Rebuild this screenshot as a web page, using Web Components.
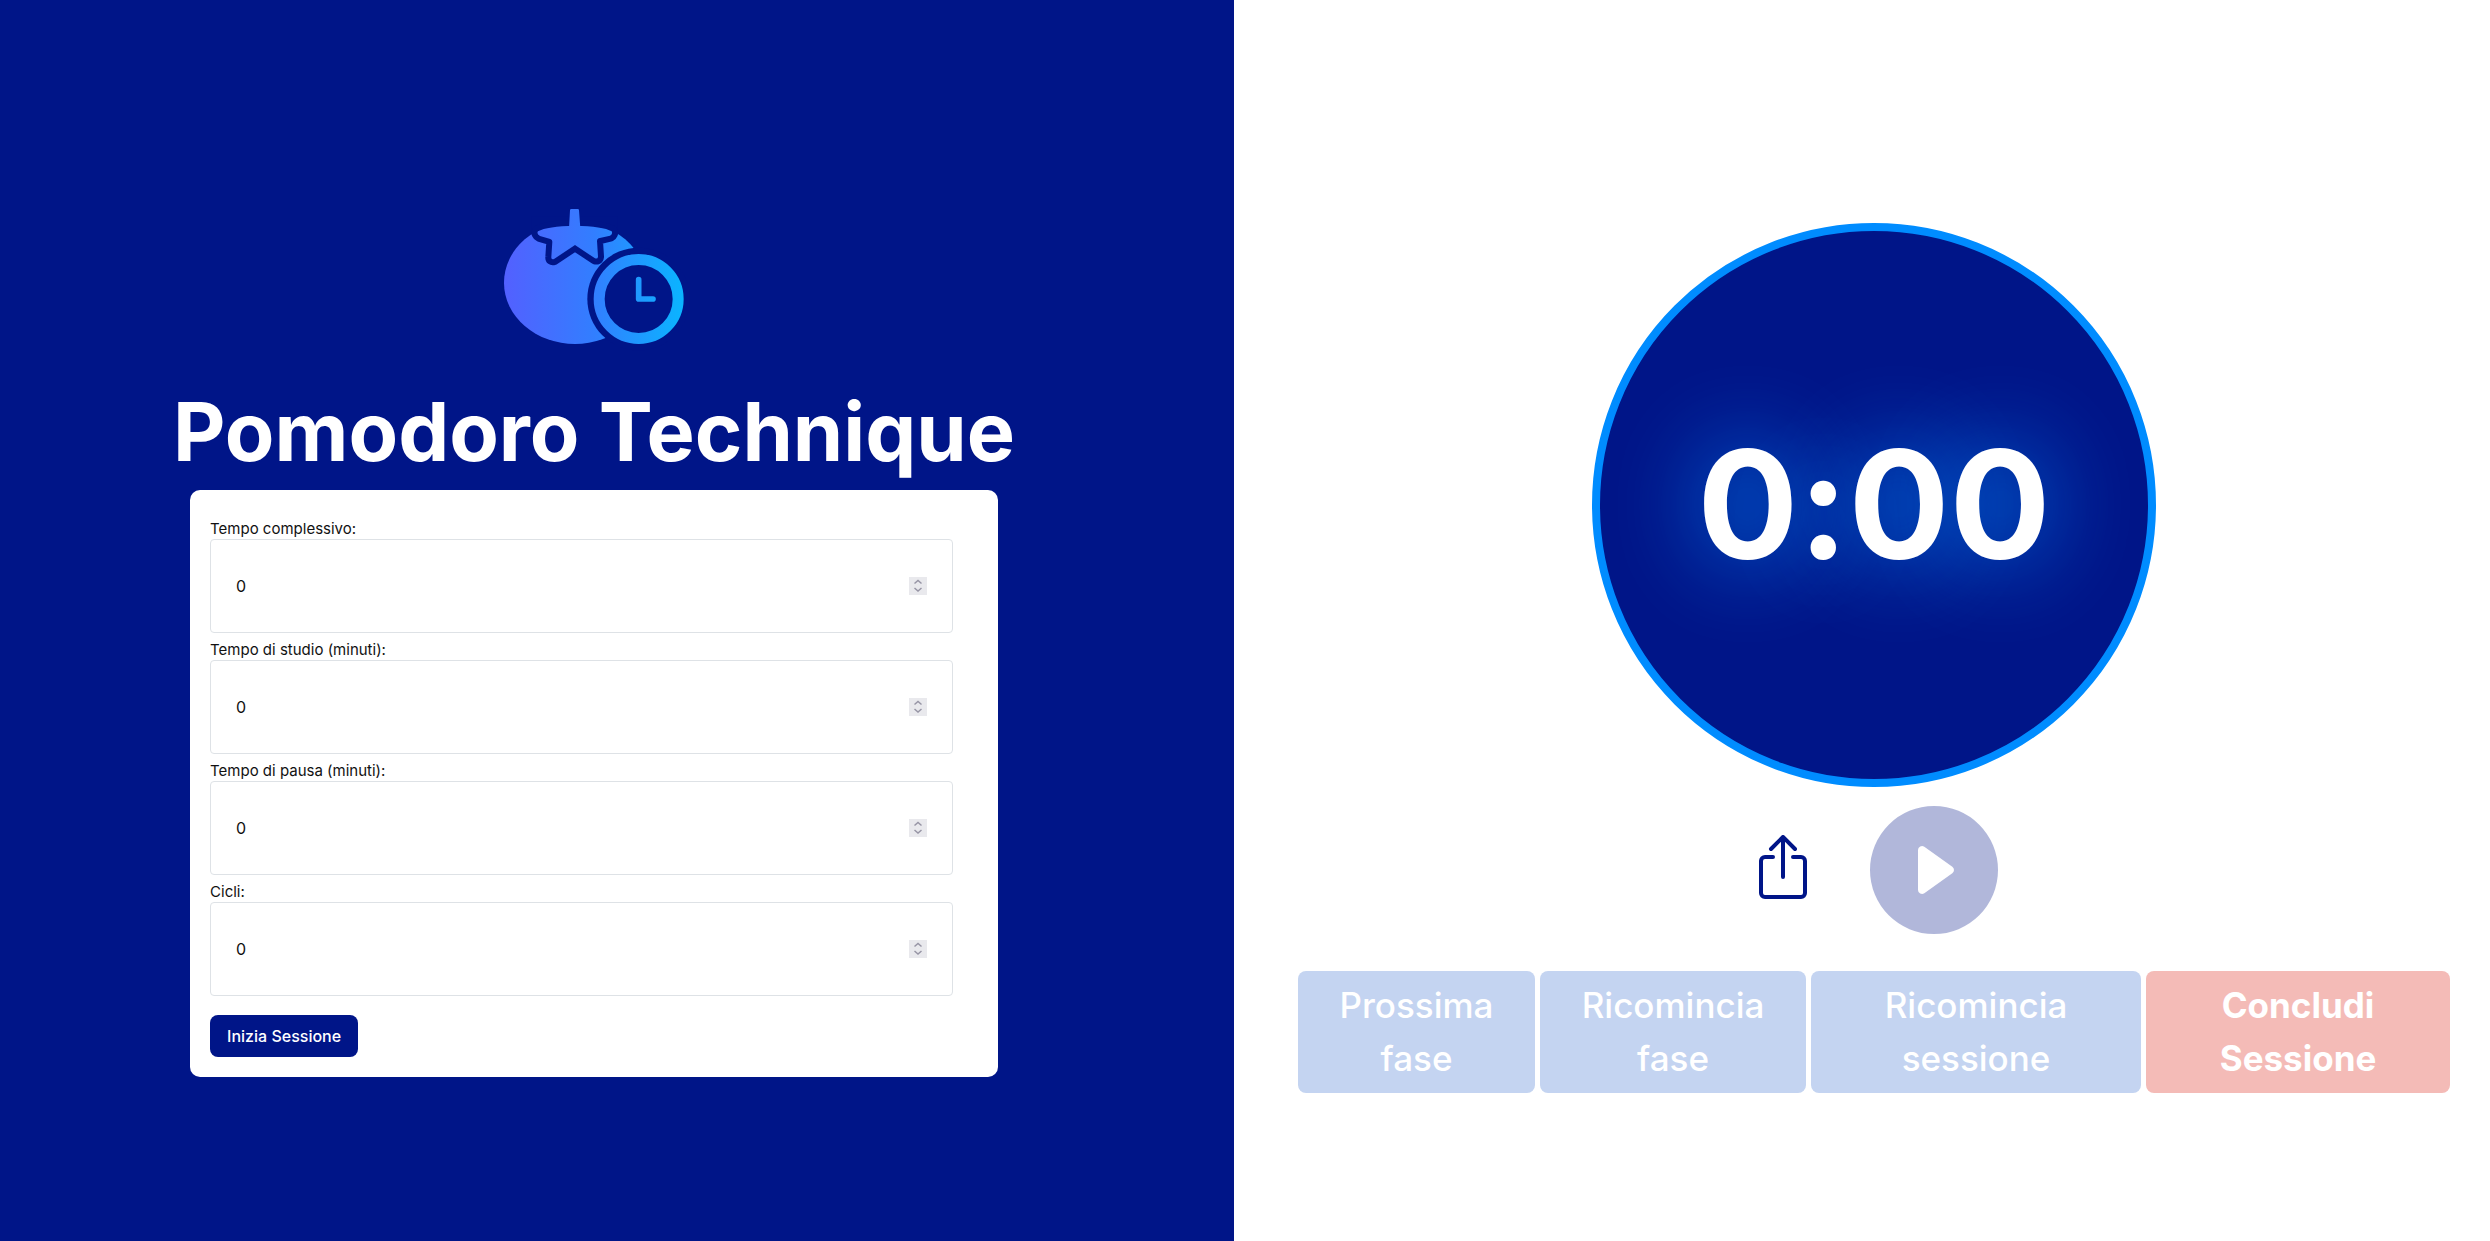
<!DOCTYPE html>
<html lang="it">
<head>
<meta charset="utf-8">
<title>Pomodoro Technique</title>
<style>
  body { margin: 0; background: #fff; font-family: Inter, "Open Sans", sans-serif; --navy: #001588; --azure: #008cff; }
</style>
</head>
<body>
<pomodoro-app></pomodoro-app>
<script>
const define = (name, html) => {
  const tpl = document.createElement('template');
  tpl.innerHTML = html;
  customElements.define(name, class extends HTMLElement {
    constructor() {
      super();
      this.attachShadow({ mode: 'open' }).append(tpl.content.cloneNode(true));
    }
  });
};

define('tomato-logo', `
<style>:host{display:block} svg{display:block;width:220px;height:220px} .cut{fill:var(--navy)} .calyx{stroke:var(--navy)}</style>
<svg viewBox="12 -78 660 660" aria-hidden="true">
  <defs>
    <linearGradient id="g" gradientUnits="userSpaceOnUse" x1="72" y1="0" x2="612" y2="0">
      <stop offset="0" stop-color="#5360ff"/><stop offset=".5" stop-color="#327eff"/><stop offset="1" stop-color="#0ab5ff"/>
    </linearGradient>
  </defs>
  <ellipse cx="285" cy="278" rx="213" ry="184" fill="url(#g)"/>
  <path class="cut" d="M155 80H413V134H155Z"/>
  <path class="calyx" d="M174 124C192 114 230 108 285 108S378 114 395 124Q399 132 390 137L356 145Q351 147 351 153L354 200Q353 208 345 205L285 165L222 207Q213 210 214 201L217 155Q217 149 211 147L180 138Q169 132 174 124Z" fill="url(#g)" stroke-width="36" stroke-linejoin="round" paint-order="stroke"/>
  <path d="M267 115L270 61Q270 57 274 57H293Q297 57 297 61L301 115Z" fill="url(#g)"/>
  <circle class="cut" cx="476" cy="327" r="154"/>
  <circle cx="476" cy="327" r="118.5" fill="none" stroke="url(#g)" stroke-width="33"/>
  <path d="M476 269V327H519" fill="none" stroke="url(#g)" stroke-width="17" stroke-linecap="round" stroke-linejoin="round"/>
</svg>`);

define('number-field', `
<style>
  :host{display:block}
  label{display:block;font-size:15px;line-height:20px;color:#111}
  .box{display:flex;align-items:center;box-sizing:border-box;height:94px;padding:0 25px;border:1px solid #dee2e6;border-radius:4px;background:#fff}
  input{flex:1;min-width:0;padding:0;border:0;outline:0;background:none;font:inherit;font-size:16px;line-height:24px;color:#111;appearance:textfield}
  input::-webkit-inner-spin-button{display:none}
  svg{width:18px;height:18px;background:#e9e9ed}
</style>
<label for="n"><slot></slot></label>
<div class="box"><input id="n" type="number" value="0">
<svg viewBox="0 0 18 18" fill="none" stroke="#9795a5" stroke-width="1.5" aria-hidden="true"><path d="M5.500 6.500L9 3.500L12.500 6.500M5.500 11L9 14L12.500 11"/></svg></div>`);

define('session-form', `
<style>
  :host{display:block;box-sizing:border-box;width:68%;padding:29px 20px 20px;border-radius:10px;background:#fff}
  form{display:flex;flex-direction:column;gap:7px;margin:0}
  number-field{margin-right:25px}
  button{align-self:flex-start;margin-top:12px;height:42px;padding:0 17px;border:0;border-radius:8px;background:var(--navy);color:#fff;font:500 16px/24px Inter,sans-serif}
</style>
<form>
  <number-field>Tempo complessivo:</number-field>
  <number-field>Tempo di studio (minuti):</number-field>
  <number-field>Tempo di pausa (minuti):</number-field>
  <number-field>Cicli:</number-field>
  <button type="button">Inizia Sessione</button>
</form>`);

define('setup-panel', `
<style>
  :host{display:flex;flex-direction:column;align-items:center;justify-content:center;box-sizing:border-box;padding-right:46px;background:var(--navy)}
  h1{margin:0 0 10px;font-size:81px;line-height:96px;font-weight:700;color:#fff;white-space:nowrap}
</style>
<tomato-logo></tomato-logo>
<h1>Pomodoro Technique</h1>
<session-form></session-form>`);

define('timer-dial', `
<style>
  :host{display:flex;align-items:center;justify-content:center;box-sizing:border-box;width:564px;height:564px;border:8px solid var(--azure);border-radius:50%;background:var(--navy);color:#fff;font-size:150px;line-height:180px;font-weight:700;font-feature-settings:"calt" 0;text-shadow:0 0 90px var(--azure)}
</style>
<slot></slot>`);

define('timer-controls', `
<style>
  :host{display:flex;align-items:center;gap:55px}
  button{display:block;padding:0;border:0;background:none;color:var(--navy)}
  .share{padding-bottom:6px}
  button:disabled{opacity:.3}
  svg{display:block;fill:currentColor}
</style>
<button class="share" type="button" aria-label="Condividi"><svg width="64" height="64" viewBox="0 0 16 16"><path d="M3.500 6a.5.5 0 0 0-.5.5v8a.5.5 0 0 0 .5.5h9a.5.5 0 0 0 .5-.5v-8a.5.5 0 0 0-.5-.5h-2a.5.5 0 0 1 0-1h2A1.500 1.500 0 0 1 14 6.500v8a1.500 1.500 0 0 1-1.500 1.500h-9A1.500 1.500 0 0 1 2 14.500v-8A1.500 1.500 0 0 1 3.500 5h2a.5.5 0 0 1 0 1h-2z"/><path d="M7.646.146a.5.5 0 0 1 .708 0l3 3a.5.5 0 0 1-.708.708L8.500 1.707V10.500a.5.5 0 0 1-1 0V1.707L5.354 3.854a.5.5 0 1 1-.708-.708l3-3z"/></svg></button>
<button type="button" aria-label="Avvia" disabled><svg width="128" height="128" viewBox="0 0 16 16"><path d="M16 8A8 8 0 1 1 0 8a8 8 0 0 1 16 0zM6.790 5.093A.5.5 0 0 0 6 5.500v5a.5.5 0 0 0 .79.407l3.500-2.500a.5.5 0 0 0 0-.814l-3.500-2.500z"/></svg></button>`);

define('phase-button', `
<style>
  :host{display:flex}
  button{flex:1;min-width:0;padding:8px 30px;border:0;border-radius:8px;background:#c4d4f1;color:#fff;font:500 35px/53px Inter,sans-serif;text-align:center}
  :host([danger]) button{background:#f4bbb7;font-weight:700}
</style>
<button type="button" disabled><slot></slot></button>`);

define('timer-panel', `
<style>
  :host{display:flex;flex-direction:column;align-items:center;justify-content:center;box-sizing:border-box;padding:75px 40px 0 64px}
  timer-controls{margin:19px 0 37px}
  nav{display:flex;gap:5px;width:100%}
  phase-button{flex:237 1 0}
  phase-button:nth-child(2){flex-grow:266}
  phase-button:nth-child(3){flex-grow:330}
  phase-button:nth-child(4){flex-grow:304}
</style>
<timer-dial>0:00</timer-dial>
<timer-controls></timer-controls>
<nav>
  <phase-button>Prossima<br>fase</phase-button>
  <phase-button>Ricomincia<br>fase</phase-button>
  <phase-button>Ricomincia<br>sessione</phase-button>
  <phase-button danger>Concludi<br>Sessione</phase-button>
</nav>`);

define('pomodoro-app', `
<style>
  :host{display:grid;grid-template-columns:1234fr 1256fr;min-height:100vh}
</style>
<setup-panel></setup-panel>
<timer-panel></timer-panel>`);
</script>
</body>
</html>
